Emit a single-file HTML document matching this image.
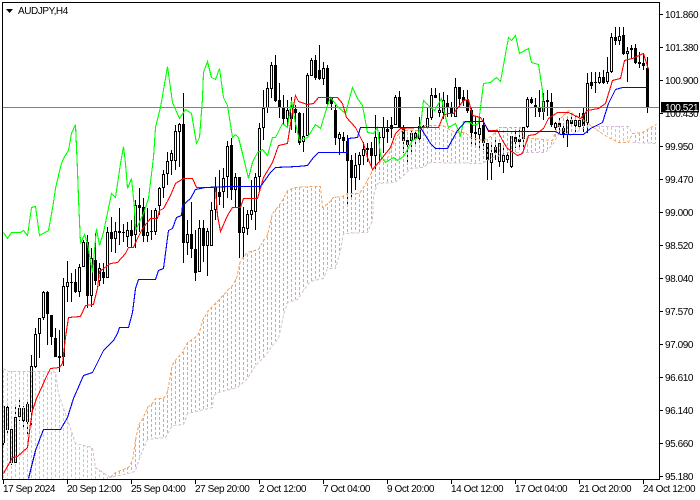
<!DOCTYPE html>
<html><head><meta charset="utf-8"><style>
html,body{margin:0;padding:0;background:#fff;width:700px;height:500px;overflow:hidden}
svg{display:block}
text{font-family:"Liberation Sans",sans-serif;font-size:10px;letter-spacing:-.43px;fill:#000}
.l{fill:none;stroke-width:1.1;shape-rendering:crispEdges}
.h{fill:none;stroke-width:1;stroke-dasharray:3 2;shape-rendering:crispEdges}
</style></head><body>
<svg width="700" height="500" viewBox="0 0 700 500" xmlns="http://www.w3.org/2000/svg">
<defs>
<clipPath id="cl1"><polygon points="3,368 8,371 52,371 55,372 58,393 68,422 75,443 92,447 95,467 110,477 110,479 3,479"/></clipPath>
<clipPath id="co1"><polygon points="110,477 115,472 128,467 132,460 135,440 138,425 143,417 147,407 152,403 155,398 163,398 167,392 171,368 173,362 182,352 187,342 195,337 199,332 202,320 208,310 215,303 232,285 236,278 240,260 247,252 258,249 263,240 267,235 272,213 277,207 282,200 287,190 295,187 312,186 320,186 322,207 328,203 333,197 342,196 347,193 359,193 363,187 367,180 372,170 378,162 387,158 392,145 397,135 402,130 418,130 425,125 443,125 447,128 455,132 465,132 470,137 483,140 492,135 498,127 520,127 523,137 552,140 555,132 560,118 568,110 572,113 582,118 590,125 590,127 582,128 570,135 560,130 553,143 545,152 508,152 493,157 482,163 430,162 422,167 410,168 403,175 395,182 377,183 373,195 372,220 367,232 343,233 340,250 335,268 327,268 323,278 313,280 308,283 297,299 287,302 283,315 278,338 272,345 265,355 255,365 247,378 237,387 218,392 213,395 212,407 200,410 187,413 183,424 172,425 165,437 147,439 140,455 135,470 132,472"/></clipPath>
<clipPath id="cl2"><polygon points="590,126 628,126 632,133 628,142 618,142 608,137 600,132"/></clipPath>
<clipPath id="co2"><polygon points="632,133 642,132 650,127 656,124 656,143 632,142"/></clipPath>
<clipPath id="c"><rect x="3" y="3" width="656" height="476"/></clipPath>
</defs>
<rect width="700" height="500" fill="#fff"/>
<g clip-path="url(#c)">
<!-- candle wicks -->
<path transform="translate(.5 0)" fill="none" stroke="#000" shape-rendering="crispEdges" d="M3 405V445M7 406V433M11 427V465M15 406V463M19 399V421M23 406V428M27 400V437M31 355V427M35 328V368M39 318V358M43 291V320M47 291V345M51 315V345M55 328V357M59 330V372M63 278V366M67 261V302M71 273V302M75 269V293M79 264V297M83 240V267M87 235V308M91 248V307M95 233V285M99 263V286M103 263V284M107 227V278M111 217V252M115 222V253M119 208V245M123 224V242M127 222V247M131 220V247M135 200V248M139 188V232M143 198V242M147 208V242M151 210V240M155 208V235M159 187V215M163 170V198M167 152V185M171 150V175M175 125V170M179 123V167M183 93V263M187 220V255M191 202V258M195 230V281M199 220V272M203 220V262M207 228V276M211 202V246M215 177V220M219 170V205M223 168V208M227 141V198M231 138V200M235 173V207M239 177V258M243 207V257M247 210V235M251 180V220M255 173V230M259 123V192M263 90V140M267 82V113M271 62V98M275 55V102M279 83V118M283 95V125M287 100V127M291 97V130M295 105V133M299 112V145M303 113V152M307 73V136M311 58V76M315 55V80M319 45V80M323 62V85M327 65V105M331 98V110M335 105V145M339 132V155M343 132V152M347 135V207M351 155V197M355 153V190M359 152V180M363 142V165M367 143V162M371 142V168M375 115V170M379 132V162M383 117V153M387 120V143M391 117V138M395 95V125M399 91V127M403 125V153M407 137V165M411 130V153M415 132V147M419 117V140M423 125V130M427 108V128M431 88V120M435 88V98M439 93V117M443 92V119M447 95V117M451 102V117M455 78V117M459 87V108M463 90V106M467 90V113M471 107V147M475 117V147M479 117V148M483 118V150M487 143V180M491 142V180M495 140V160M499 143V167M503 148V173M507 152V163M511 136V168M515 130V148M519 130V148M523 127V147M527 97V128M531 97V104M535 98V117M539 90V117M543 93V120M547 90V116M551 93V127M555 122V130M559 118V133M563 123V138M567 117V147M571 113V127M575 116V132M579 113V128M583 108V132M587 73V133M591 72V89M595 72V93M599 72V84M603 70V84M607 57V84M611 33V73M615 27V45M619 27V45M623 27V55M627 47V82M631 45V58M635 44V64M639 52V68M643 53V70M647 57V113"/>
<!-- candle bodies outer -->
<path fill="#000" shape-rendering="crispEdges" d="M2 406h3v37h-3zM6 407h3v23h-3zM10 429h3v34h-3zM14 417h3v46h-3zM18 408h3v9h-3zM22 408h3v13h-3zM26 404h3v18h-3zM30 366h3v46h-3zM34 334h3v33h-3zM38 318h3v16h-3zM42 292h3v26h-3zM46 292h3v22h-3zM50 315h3v22h-3zM54 338h3v19h-3zM58 356h3v2h-3zM62 286h3v71h-3zM66 282h3v5h-3zM70 282h3v1h-3zM74 282h3v10h-3zM78 267h3v25h-3zM82 242h3v25h-3zM86 242h3v54h-3zM90 258h3v38h-3zM94 260h3v21h-3zM98 268h3v13h-3zM102 272h3v6h-3zM106 232h3v46h-3zM110 232h3v7h-3zM114 231h3v8h-3zM118 231h3v2h-3zM122 232h3v1h-3zM126 230h3v7h-3zM130 230h3v6h-3zM134 205h3v30h-3zM138 205h3v3h-3zM142 207h3v29h-3zM146 232h3v4h-3zM150 231h3v1h-3zM154 210h3v22h-3zM158 188h3v18h-3zM162 174h3v14h-3zM166 161h3v13h-3zM170 153h3v8h-3zM174 131h3v30h-3zM178 124h3v8h-3zM182 124h3v119h-3zM186 234h3v9h-3zM190 234h3v15h-3zM194 249h3v24h-3zM198 228h3v44h-3zM202 228h3v18h-3zM206 231h3v15h-3zM210 210h3v36h-3zM214 187h3v23h-3zM218 192h3v5h-3zM222 178h3v14h-3zM226 146h3v31h-3zM230 145h3v45h-3zM234 177h3v13h-3zM238 177h3v56h-3zM242 227h3v6h-3zM246 214h3v15h-3zM250 210h3v5h-3zM254 177h3v35h-3zM258 128h3v49h-3zM262 108h3v20h-3zM266 88h3v20h-3zM270 65h3v24h-3zM274 65h3v36h-3zM278 100h3v8h-3zM282 108h3v11h-3zM286 110h3v9h-3zM290 106h3v13h-3zM294 109h3v4h-3zM298 113h3v30h-3zM302 136h3v6h-3zM306 75h3v61h-3zM310 60h3v16h-3zM314 60h3v18h-3zM318 70h3v9h-3zM322 68h3v11h-3zM326 68h3v36h-3zM330 98h3v6h-3zM334 110h3v28h-3zM338 134h3v5h-3zM342 137h3v4h-3zM346 141h3v20h-3zM350 160h3v18h-3zM354 165h3v13h-3zM358 155h3v10h-3zM362 149h3v7h-3zM366 148h3v2h-3zM370 148h3v8h-3zM374 137h3v19h-3zM378 137h3v1h-3zM382 127h3v11h-3zM386 129h3v3h-3zM390 125h3v4h-3zM394 97h3v28h-3zM398 97h3v30h-3zM402 127h3v14h-3zM406 140h3v5h-3zM410 133h3v8h-3zM414 133h3v6h-3zM418 126h3v13h-3zM422 126h3v2h-3zM426 118h3v10h-3zM430 95h3v23h-3zM434 95h3v3h-3zM438 110h3v3h-3zM442 100h3v13h-3zM446 103h3v4h-3zM450 107h3v6h-3zM454 87h3v30h-3zM458 87h3v12h-3zM462 97h3v4h-3zM466 100h3v11h-3zM470 110h3v23h-3zM474 132h3v2h-3zM478 128h3v7h-3zM482 125h3v18h-3zM486 143h3v17h-3zM490 153h3v10h-3zM494 147h3v6h-3zM498 143h3v19h-3zM502 155h3v7h-3zM506 155h3v5h-3zM510 136h3v31h-3zM514 137h3v5h-3zM518 139h3v3h-3zM522 127h3v12h-3zM526 99h3v28h-3zM530 99h3v4h-3zM534 105h3v3h-3zM538 107h3v5h-3zM542 101h3v11h-3zM546 100h3v2h-3zM550 102h3v23h-3zM554 123h3v5h-3zM558 123h3v4h-3zM562 128h3v7h-3zM566 120h3v15h-3zM570 120h3v4h-3zM574 120h3v6h-3zM578 120h3v7h-3zM582 113h3v13h-3zM586 83h3v40h-3zM590 82h3v4h-3zM594 82h3v1h-3zM598 77h3v6h-3zM602 77h3v6h-3zM606 72h3v10h-3zM610 37h3v35h-3zM614 37h3v4h-3zM618 36h3v5h-3zM622 35h3v19h-3zM626 51h3v3h-3zM630 48h3v2h-3zM634 48h3v15h-3zM638 62h3v2h-3zM642 63h3v3h-3zM646 68h3v39h-3z"/>
<!-- white candle interiors -->
<path fill="#fff" shape-rendering="crispEdges" d="M3 407h1v35h-1zM7 408h1v21h-1zM11 430h1v32h-1zM15 418h1v44h-1zM19 409h1v7h-1zM23 409h1v11h-1zM27 405h1v16h-1zM31 367h1v44h-1zM35 335h1v31h-1zM39 319h1v14h-1zM43 293h1v24h-1zM63 287h1v69h-1zM67 283h1v3h-1zM79 268h1v23h-1zM83 243h1v23h-1zM91 259h1v36h-1zM99 269h1v11h-1zM107 233h1v44h-1zM115 232h1v6h-1zM127 231h1v5h-1zM135 206h1v28h-1zM147 233h1v2h-1zM155 211h1v20h-1zM159 189h1v16h-1zM163 175h1v12h-1zM167 162h1v11h-1zM171 154h1v6h-1zM175 132h1v28h-1zM179 125h1v6h-1zM187 235h1v7h-1zM199 229h1v42h-1zM207 232h1v13h-1zM211 211h1v34h-1zM215 188h1v21h-1zM223 179h1v12h-1zM227 147h1v29h-1zM235 178h1v11h-1zM243 228h1v4h-1zM247 215h1v13h-1zM251 211h1v3h-1zM255 178h1v33h-1zM259 129h1v47h-1zM263 109h1v18h-1zM267 89h1v18h-1zM271 66h1v22h-1zM287 111h1v7h-1zM291 107h1v11h-1zM303 137h1v4h-1zM307 76h1v59h-1zM311 61h1v14h-1zM323 69h1v9h-1zM339 135h1v3h-1zM355 166h1v11h-1zM359 156h1v8h-1zM363 150h1v5h-1zM375 138h1v17h-1zM383 128h1v9h-1zM395 98h1v26h-1zM411 134h1v6h-1zM419 127h1v11h-1zM427 119h1v8h-1zM431 96h1v21h-1zM439 111h1v1h-1zM443 101h1v11h-1zM455 88h1v28h-1zM479 129h1v5h-1zM491 154h1v8h-1zM499 144h1v17h-1zM503 156h1v5h-1zM507 156h1v3h-1zM511 137h1v29h-1zM523 128h1v10h-1zM527 100h1v26h-1zM543 102h1v9h-1zM555 124h1v3h-1zM567 121h1v13h-1zM575 121h1v4h-1zM579 121h1v5h-1zM587 84h1v38h-1zM599 78h1v4h-1zM607 73h1v8h-1zM611 38h1v33h-1zM619 37h1v3h-1zM627 52h1v1h-1z"/>
<!-- kumo hatching -->
<g clip-path="url(#cl1)"><path class="h" stroke="#D8BFD8" d="M3.500 360V480M7.500 363V480M11.500 361V480M15.500 364V480M19.500 362V480M23.500 362V480M27.500 364V480M31.500 360V480M35.500 363V480M39.500 361V480M43.500 364V480M47.500 362V480M51.500 362V480M55.500 364V480M59.500 360V480M63.500 363V480M67.500 361V480M71.500 364V480M75.500 362V480M79.500 362V480M83.500 364V480M87.500 360V480M91.500 363V480M95.500 361V480M99.500 364V480M103.500 362V480M107.500 362V480"/></g>
<g clip-path="url(#co1)"><path class="h" stroke="#F4A460" d="M111.500 100V480M115.500 103V480M119.500 101V480M123.500 104V480M127.500 102V480M131.500 102V480M135.500 104V480M139.500 100V480M143.500 103V480M147.500 101V480M151.500 104V480M155.500 102V480M159.500 102V480M163.500 104V480M167.500 100V480M171.500 103V480M175.500 101V480M179.500 104V480M183.500 102V480M187.500 102V480M191.500 104V480M195.500 100V480M199.500 103V480M203.500 101V480M207.500 104V480M211.500 102V480M215.500 102V480M219.500 104V480M223.500 100V480M227.500 103V480M231.500 101V480M235.500 104V480M239.500 102V480M243.500 102V480M247.500 104V480M251.500 100V480M255.500 103V480M259.500 101V480M263.500 104V480M267.500 102V480M271.500 102V480M275.500 104V480M279.500 100V480M283.500 103V480M287.500 101V480M291.500 104V480M295.500 102V480M299.500 102V480M303.500 104V480M307.500 100V480M311.500 103V480M315.500 101V480M319.500 104V480M323.500 102V480M327.500 102V480M331.500 104V480M335.500 100V480M339.500 103V480M343.500 101V480M347.500 104V480M351.500 102V480M355.500 102V480M359.500 104V480M363.500 100V480M367.500 103V480M371.500 101V480M375.500 104V480M379.500 102V480M383.500 102V480M387.500 104V480M391.500 100V480M395.500 103V480M399.500 101V480M403.500 104V480M407.500 102V480M411.500 102V480M415.500 104V480M419.500 100V480M423.500 103V480M427.500 101V480M431.500 104V480M435.500 102V480M439.500 102V480M443.500 104V480M447.500 100V480M451.500 103V480M455.500 101V480M459.500 104V480M463.500 102V480M467.500 102V480M471.500 104V480M475.500 100V480M479.500 103V480M483.500 101V480M487.500 104V480M491.500 102V480M495.500 102V480M499.500 104V480M503.500 100V480M507.500 103V480M511.500 101V480M515.500 104V480M519.500 102V480M523.500 102V480M527.500 104V480M531.500 100V480M535.500 103V480M539.500 101V480M543.500 104V480M547.500 102V480M551.500 102V480M555.500 104V480M559.500 100V480M563.500 103V480M567.500 101V480M571.500 104V480M575.500 102V480M579.500 102V480M583.500 104V480M587.500 100V480"/></g>
<g clip-path="url(#cl2)"><path class="h" stroke="#D8BFD8" d="M591.500 100V200M595.500 103V200M599.500 101V200M603.500 104V200M607.500 102V200M611.500 102V200M615.500 104V200M619.500 100V200M623.500 103V200M627.500 101V200"/></g>
<g clip-path="url(#co2)"><path class="h" stroke="#F4A460" d="M635.500 100V200M639.500 103V200M643.500 101V200M647.500 104V200M651.500 102V200M655.500 102V200"/></g>
<!-- kumo outlines -->
<g stroke-dasharray="3 2">
<polyline fill="none" shape-rendering="crispEdges" transform="translate(.5 .5)" stroke="#D8BFD8" points="3,368 8,371 52,371 55,372 58,393 68,422 75,443 92,447 95,467 110,477 132,472 135,470 140,455 147,439 165,437 172,425 183,424 187,413 200,410 212,407 213,395 218,392 237,387 247,378 255,365 265,355 272,345 278,338 283,315 287,302 297,299 308,283 313,280 323,278 327,268 335,268 340,250 343,233 367,232 372,220 373,195 377,183 395,182 403,175 410,168 422,167 430,162 482,163 493,157 508,152 545,152 553,143 560,130 570,135 582,128 590,126 628,126 632,133"/>
<polyline fill="none" shape-rendering="crispEdges" transform="translate(.5 .5)" stroke="#D8BFD8" points="632,142 656,143"/>
<polyline fill="none" shape-rendering="crispEdges" transform="translate(.5 .5)" stroke="#F4A460" points="110,477 115,472 128,467 132,460 135,440 138,425 143,417 147,407 152,403 155,398 163,398 167,392 171,368 173,362 182,352 187,342 195,337 199,332 202,320 208,310 215,303 232,285 236,278 240,260 247,252 258,249 263,240 267,235 272,213 277,207 282,200 287,190 295,187 312,186 320,186 322,207 328,203 333,197 342,196 347,193 359,193 363,187 367,180 372,170 378,162 387,158 392,145 397,135 402,130 418,130 425,125 443,125 447,128 455,132 465,132 470,137 483,140 492,135 498,127 520,127 523,137 552,140 555,132 560,118 568,110 572,113 582,118 590,125 600,132 608,137 618,142 628,142 632,133 642,132 650,127 656,124"/>
</g>
<!-- price line -->
<rect x="3" y="107" width="656" height="1" fill="#808080"/>
<!-- ichimoku lines -->
<polyline class="l" transform="translate(.5 .5)" stroke="#00ff00" points="3,232 7,238 11,232 20,232 23,230 27,235 31,207 35,206 39,235 48,230 52,208 55,188 58,175 61,163 63,158 68,150 71,133 75,124 77,170 78,198 80,243 84,234 87,243 92,272 96,228 99,245 103,232 111,193 115,197 120,163 123,146 125,163 127,188 131,178 134,208 135,230 143,213 148,198 153,157 155,127 160,107 167,66 172,102 179,118 185,109 191,113 196,143 199,137 202,98 203,72 207,61 211,77 215,79 219,68 223,97 227,105 232,137 235,134 238,137 242,153 248,178 252,162 257,152 262,149 267,155 272,137 275,137 282,123 287,127 291,100 295,123 299,140 307,137 315,124 320,128 327,105 330,97 337,106 345,113 352,87 357,98 362,105 367,132 373,133 377,127 380,155 385,162 393,157 397,160 403,156 412,140 417,137 421,118 423,100 430,107 434,110 441,98 445,117 448,127 455,123 460,135 463,121 470,122 473,125 478,123 483,83 490,82 496,77 500,81 508,37 511,40 515,35 519,53 528,48 531,62 538,64 542,90 543,112"/>
<polyline class="l" transform="translate(.5 .5)" stroke="#ff0000" points="3,473 12,457 17,456 27,447 30,423 32,410 36,398 42,385 45,378 50,368 59,367 62,363 65,337 68,317 80,316 85,305 93,304 97,288 99,271 110,263 117,262 125,253 128,247 133,247 136,240 142,228 150,218 157,218 159,210 163,208 170,195 175,183 183,178 192,178 196,187 215,187 217,215 220,231 227,215 232,207 240,207 243,198 257,198 263,177 272,162 278,145 287,143 291,117 295,95 298,101 307,104 313,103 318,97 337,97 342,103 346,117 355,127 363,143 367,157 372,169 378,162 390,147 395,133 400,128 417,127 438,127 443,115 447,113 453,113 463,100 468,99 472,115 480,117 485,125 488,130 497,130 502,140 507,148 517,155 522,153 528,135 535,134 543,128 548,118 557,112 568,112 580,118 587,110 598,108 605,103 612,80 620,78 624,60 632,58 643,53 648,69"/>
<polyline class="l" transform="translate(.5 .5)" stroke="#0000ff" points="28,478 32,462 35,450 43,429 60,429 67,417 73,398 83,375 92,372 97,362 103,350 113,340 117,333 119,327 128,327 132,312 135,288 138,279 155,279 158,270 163,268 166,245 168,230 172,228 176,217 181,215 182,205 190,198 195,189 205,187 230,186 260,186 270,172 275,167 297,166 307,165 313,157 318,152 347,152 348,138 357,137 360,127 420,127 430,143 435,148 447,148 457,130 465,121 483,121 488,131 555,131 560,134 583,134 590,128 602,122 608,103 615,89 622,87 647,87"/>
</g>
<!-- frame -->
<g fill="#000" shape-rendering="crispEdges">
<rect x="2" y="2" width="658" height="1"/>
<rect x="2" y="2" width="1" height="478"/>
<rect x="659" y="2" width="1" height="478"/>
<rect x="2" y="479" width="658" height="1"/>
<path d="M660 14h3v1h-3zM660 47h3v1h-3zM660 80h3v1h-3zM660 113h3v1h-3zM660 146h3v1h-3zM660 179h3v1h-3zM660 212h3v1h-3zM660 245h3v1h-3zM660 278h3v1h-3zM660 311h3v1h-3zM660 344h3v1h-3zM660 377h3v1h-3zM660 410h3v1h-3zM660 443h3v1h-3zM660 476h3v1h-3z"/>
<path d="M3 480h1v4h-1zM67 480h1v4h-1zM131 480h1v4h-1zM195 480h1v4h-1zM259 480h1v4h-1zM323 480h1v4h-1zM387 480h1v4h-1zM451 480h1v4h-1zM515 480h1v4h-1zM579 480h1v4h-1zM643 480h1v4h-1z"/>
</g>
<!-- title -->
<polygon points="6,9 13,9 9.500,13" fill="#000"/>
<text x="18" y="14">AUDJPY,H4</text>
<!-- price axis -->
<text x="665" y="18">101.860</text>
<text x="665" y="51">101.380</text>
<text x="665" y="84">100.900</text>
<text x="665" y="117">100.430</text>
<text x="665" y="150">99.950</text>
<text x="665" y="183">99.470</text>
<text x="665" y="216">99.000</text>
<text x="665" y="249">98.520</text>
<text x="665" y="282">98.040</text>
<text x="665" y="315">97.570</text>
<text x="665" y="348">97.090</text>
<text x="665" y="381">96.610</text>
<text x="665" y="414">96.140</text>
<text x="665" y="447">95.660</text>
<text x="665" y="480">95.180</text>
<rect x="661" y="102" width="38" height="10.500" fill="#000"/>
<text x="665" y="111" style="fill:#fff">100.521</text>
<!-- time axis -->
<text x="3" y="492">17 Sep 2024</text>
<text x="67" y="492">20 Sep 12:00</text>
<text x="131" y="492">25 Sep 04:00</text>
<text x="195" y="492">27 Sep 20:00</text>
<text x="259" y="492">2 Oct 12:00</text>
<text x="323" y="492">7 Oct 04:00</text>
<text x="387" y="492">9 Oct 20:00</text>
<text x="451" y="492">14 Oct 12:00</text>
<text x="515" y="492">17 Oct 04:00</text>
<text x="579" y="492">21 Oct 20:00</text>
<text x="643" y="492">24 Oct 12:00</text>
</svg>
</body></html>
